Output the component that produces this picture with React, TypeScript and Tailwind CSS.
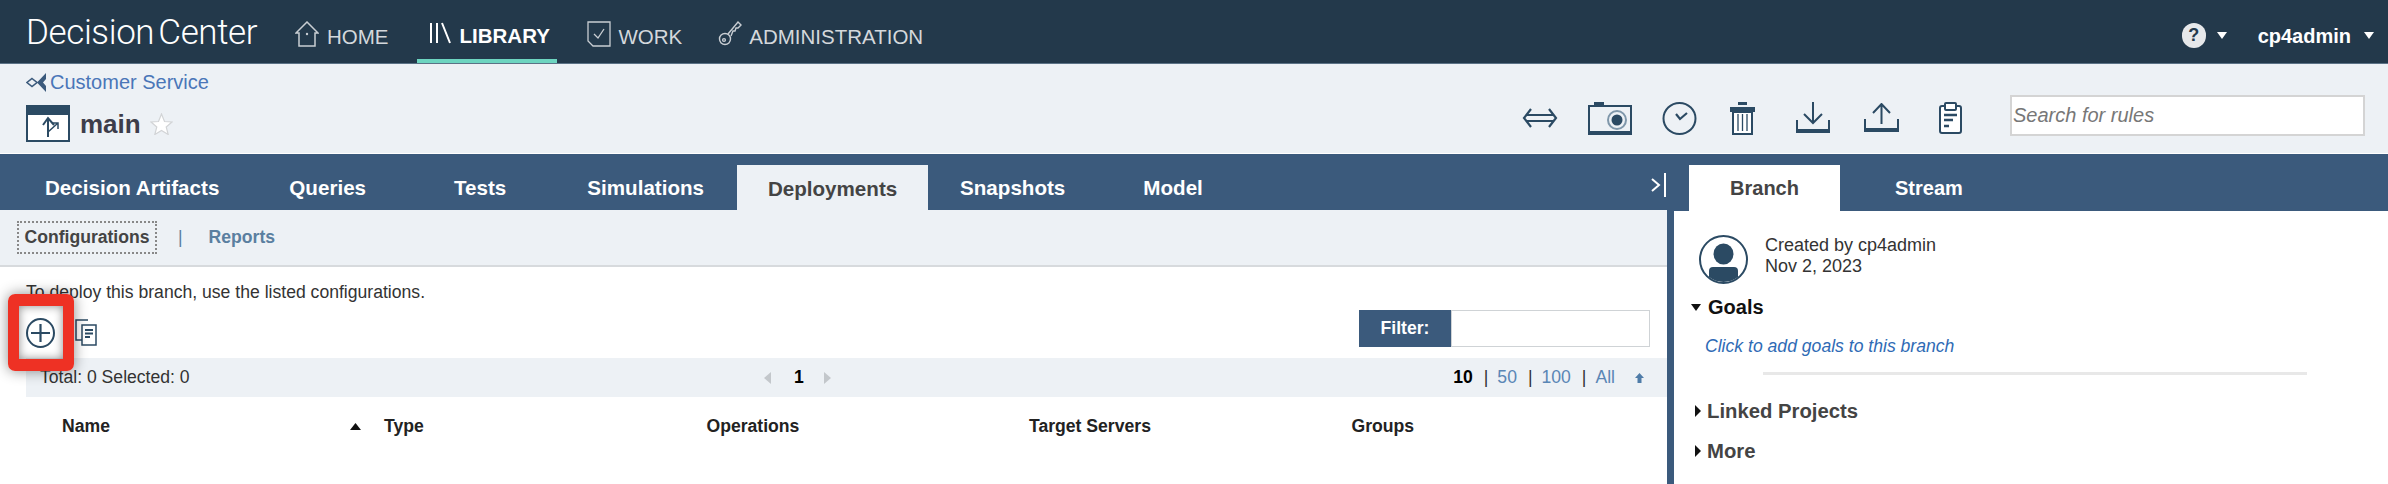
const ink = "#2b4a63";

const HomeIcon = () => (
  <svg width="24" height="26" viewBox="0 0 24 26" fill="none" stroke="#c9ced3" strokeWidth="1.5">
    <path d="M1 12 12 1l11 11h-3v13H4V12z" />
    <circle cx="12" cy="13" r="1.200" fill="#c9ced3" stroke="none" />
  </svg>
);

const LibraryIcon = () => (
  <svg width="22" height="22" viewBox="0 0 22 22" fill="none" stroke="#fff" strokeWidth="2">
    <path d="M2 1v20M8 1v20M13 1l8 20" />
  </svg>
);

const WorkIcon = () => (
  <svg width="24" height="26" viewBox="0 0 24 26" fill="none" stroke="#c9ced3" strokeWidth="1.3">
    <path d="M1 1h22v24H6l-5-5z" />
    <path d="M7 13l4 4 6-9" />
  </svg>
);

const KeyIcon = () => (
  <svg width="24" height="26" viewBox="0 0 24 26" fill="none" stroke="#c9ced3" strokeWidth="1.400">
    <circle cx="7" cy="18" r="5.500" />
    <circle cx="6" cy="19" r="1.400" />
    <path d="M10 13 20 1l3 3-3 3-2 0-1 3-2 0-2 5" />
  </svg>
);

const Caret = ({ color = "#fff" }: { color?: string }) => (
  <svg width="10" height="7" viewBox="0 0 10 7">
    <path d="M0 0h10L5 7z" fill={color} />
  </svg>
);

const CaretUp = ({ color = "#111" }: { color?: string }) => (
  <svg width="11" height="7" viewBox="0 0 11 7">
    <path d="M0 7h11L5.500 0z" fill={color} />
  </svg>
);

const ProjectIcon = () => (
  <svg width="20" height="19" viewBox="0 0 20 19" fill="none">
    <path d="M6 5.500 11 9.500 6 13.500 1 9.500z" stroke="#3b5a7c" strokeWidth="1.600" />
    <path d="M11 9.500 20 0v6l-3 3.500 3 3.500v6z" fill="#3b5a7c" />
  </svg>
);

const BranchIcon = () => (
  <svg width="44" height="37" viewBox="0 0 44 37" fill="none">
    <rect x="1" y="1" width="42" height="35" fill="#fff" stroke={ink} strokeWidth="2" />
    <rect x="1" y="1" width="42" height="9" fill={ink} />
    <path d="M22 32V14M17 20l5-7 6 7" stroke={ink} strokeWidth="2" />
    <path d="M22 27l10-9M26 18h6v6" stroke={ink} strokeWidth="1.500" />
  </svg>
);

const StarIcon = () => (
  <svg width="23" height="22" viewBox="0 0 23 22">
    <path d="M11.500 1l3 7.500 7.500.5-5.800 5 2 7.500-6.700-4-6.700 4 2-7.500L1 9l7.500-.5z" fill="#fff" stroke="#d2d4d6" strokeWidth="1.200" />
  </svg>
);

const CompareIcon = () => (
  <svg width="36" height="20" viewBox="0 0 36 20" fill="none" stroke={ink} strokeWidth="2.200">
    <path d="M9 1 2 10l7 9M27 1l7 9-7 9" />
    <path d="M5 7h26M5 13h26" strokeWidth="1.800" />
  </svg>
);

const CameraIcon = () => (
  <svg width="44" height="33" viewBox="0 0 44 33" fill="none">
    <rect x="6" y="0" width="10" height="5" fill={ink} />
    <rect x="1" y="4" width="42" height="28" stroke={ink} strokeWidth="2" />
    <rect x="1" y="29" width="42" height="3" fill={ink} />
    <circle cx="29" cy="18" r="9" stroke="#7f97aa" strokeWidth="2" />
    <circle cx="29" cy="18" r="5.500" fill={ink} />
  </svg>
);

const ClockIcon = () => (
  <svg width="35" height="33" viewBox="0 0 35 33" fill="none" stroke={ink} strokeWidth="2">
    <ellipse cx="17.500" cy="16.500" rx="16" ry="15.500" />
    <path d="M14 12l4 5 7-6" strokeWidth="2.200" />
  </svg>
);

const TrashIcon = () => (
  <svg width="25" height="33" viewBox="0 0 25 33" fill="none">
    <rect x="8" y="0" width="9" height="3" fill={ink} />
    <rect x="0" y="5" width="25" height="5" fill={ink} />
    <rect x="3" y="10" width="19" height="22" fill="#fff" stroke={ink} strokeWidth="2" />
    <path d="M8 12v17M12.500 12v17M17 12v17" stroke={ink} strokeWidth="1.300" />
  </svg>
);

const DownloadIcon = () => (
  <svg width="34" height="32" viewBox="0 0 34 32" fill="none" stroke={ink} strokeWidth="2">
    <path d="M17 0v20M8 12l9 9 9-9" />
    <path d="M1 18v12h32V18" />
    <path d="M1 29h32" strokeWidth="4" />
  </svg>
);

const UploadIcon = () => (
  <svg width="35" height="30" viewBox="0 0 35 30" fill="none" stroke={ink} strokeWidth="2">
    <path d="M17.500 21V1M9 10l8.500-9 8.500 9" />
    <path d="M1 16v12h33V16" />
    <path d="M1 27h33" strokeWidth="4" />
  </svg>
);

const ClipboardIcon = () => (
  <svg width="23" height="32" viewBox="0 0 23 32" fill="none">
    <rect x="1" y="4" width="21" height="27" rx="2" fill="#fff" stroke={ink} strokeWidth="2" />
    <rect x="6" y="1" width="11" height="7" rx="1" fill="#fff" stroke={ink} strokeWidth="2" />
    <path d="M5 13h13M5 18h9M5 24h5" stroke={ink} strokeWidth="2.500" />
  </svg>
);

const CollapseIcon = () => (
  <svg width="16" height="24" viewBox="0 0 16 24" fill="none" stroke="#fff" strokeWidth="2">
    <path d="M1 6l7 6-7 6M14 0v24" />
  </svg>
);

const PlusIcon = () => (
  <svg width="29" height="30" viewBox="0 0 29 30" fill="none" stroke={ink}>
    <ellipse cx="14.500" cy="15" rx="13.500" ry="14" strokeWidth="2" />
    <path d="M14.500 6v18M5 15h19" strokeWidth="2.200" />
  </svg>
);

const CopyIcon = () => (
  <svg width="22" height="27" viewBox="0 0 22 27" fill="none" stroke={ink} strokeWidth="1.500">
    <path d="M13 1H1v20h6" />
    <rect x="7" y="6" width="14" height="20" fill="#fff" />
    <path d="M10 11h8M10 14.500h8M10 18h5" strokeWidth="1.800" />
  </svg>
);

const AvatarIcon = () => (
  <svg width="49" height="49" viewBox="0 0 49 49" fill="none">
    <circle cx="24.500" cy="24.500" r="23.500" fill="#fff" stroke={ink} strokeWidth="2" />
    <ellipse cx="24.500" cy="19" rx="10" ry="10.500" fill={ink} />
    <path d="M10 42v-6a4 4 0 0 1 4-4h21a4 4 0 0 1 4 4v6a24 24 0 0 1-29 0z" fill={ink} />
  </svg>
);

const SmallArrow = ({ d, color }: { d: string; color: string }) => (
  <svg width="11" height="14" viewBox="0 0 11 14">
    <path d={d} fill={color} />
  </svg>
);

const mainTabs = [
  { label: "Decision Artifacts", className: "ml-[45px]" },
  { label: "Queries", className: "ml-[70px]" },
  { label: "Tests", className: "ml-[88px]" },
  { label: "Simulations", className: "ml-[81px]" },
];

const columns = ["Type", "Operations", "Target Servers", "Groups"];

export default function App() {
  return (
    <div className="flex h-[484px] w-[2388px] flex-col overflow-hidden bg-white font-['Liberation_Sans',Arial,sans-serif] text-[17.600px] text-[#333]">
      <header className="flex h-[64px] shrink-0 items-stretch border-b border-[#5b7286] bg-[#23394b] pl-[26px] text-[20.500px] text-[#d4d8dc]">
        <div className="mt-[14px] w-[269px] font-['Roboto',sans-serif] text-[35px] leading-[37px] font-light tracking-[-0.400px] text-white [word-spacing:-4px]">
          Decision Center
        </div>
        <div className="mt-[5px] flex items-center gap-[8px]">
          <HomeIcon />
          <span className="pt-[6px]">HOME</span>
        </div>
        <div className="ml-[28px] flex w-[140px] items-center gap-[9px] border-b-4 border-[#6dd5c0] pt-[6px] pl-[12px] font-bold text-white">
          <LibraryIcon />
          <span className="pt-[8px]">LIBRARY</span>
        </div>
        <div className="ml-[30px] flex items-center gap-[8px] pt-[5px]">
          <WorkIcon />
          <span className="pt-[6px]">WORK</span>
        </div>
        <div className="ml-[36px] flex items-center gap-[7px] pt-[5px]">
          <KeyIcon />
          <span className="pt-[6px]">ADMINISTRATION</span>
        </div>
        <div className="ml-auto flex items-center pt-[8px] pr-[14px] text-[20px] font-bold text-white">
          <div className="flex h-[25px] w-[24px] items-center justify-center rounded-full bg-[#e6e8ea] text-[18px] text-[#23394b]">?</div>
          <div className="ml-[11px]"><Caret /></div>
          <span className="ml-[31px]">cp4admin</span>
          <div className="ml-[13px]"><Caret /></div>
        </div>
      </header>

      <div className="flex h-[90px] shrink-0 border-b border-white bg-[#edf1f5] pr-[23px] pl-[26px]">
        <div>
          <div className="mt-[8px] flex items-center gap-[4px] text-[20px] leading-[20px] text-[#4a76b8]">
            <ProjectIcon />
            <span>Customer Service</span>
          </div>
          <div className="mt-[13px] flex items-center">
            <BranchIcon />
            <span className="ml-[10px] text-[26px] leading-[30px] font-bold text-[#3d3d4a]">main</span>
            <span className="ml-[9px]"><StarIcon /></span>
          </div>
        </div>
        <div className="ml-auto flex items-center pt-[19px]">
          <CompareIcon />
          <span className="ml-[30px]"><CameraIcon /></span>
          <span className="ml-[30px]"><ClockIcon /></span>
          <span className="ml-[33px]"><TrashIcon /></span>
          <span className="ml-[41px]"><DownloadIcon /></span>
          <span className="ml-[34px]"><UploadIcon /></span>
          <span className="ml-[40px]"><ClipboardIcon /></span>
          <input
            readOnly
            placeholder="Search for rules"
            className="mb-[6px] ml-[48px] h-[41px] w-[355px] border-2 border-[#d4d4d4] bg-white pl-[1px] text-[20px] italic outline-none placeholder:text-[#777]"
          />
        </div>
      </div>

      <div className="flex min-h-0 flex-1">
        <div className="flex w-[1667px] shrink-0 flex-col">
          <div className="relative flex h-[56px] shrink-0 items-end bg-[#3b5a7c] text-[20.600px] font-bold text-white">
            {mainTabs.map((tab) => (
              <div key={tab.label} className={`flex h-[45px] items-center pt-[1px] ${tab.className}`}>{tab.label}</div>
            ))}
            <div className="ml-[33px] flex h-[45px] w-[191px] items-center justify-center bg-[#edf1f5] pt-[3px] text-[#444]">Deployments</div>
            <div className="ml-[32px] flex h-[45px] items-center pt-[1px]">Snapshots</div>
            <div className="ml-[78px] flex h-[45px] items-center pt-[1px]">Model</div>
            <div className="absolute top-[19px] right-0"><CollapseIcon /></div>
          </div>

          <div className="flex h-[57px] shrink-0 items-start border-b-2 border-[#d7dadd] bg-[#edf1f5] pt-[11px] pl-[17px] font-bold">
            <div className="flex h-[33px] w-[140px] items-center justify-center border-2 border-dotted border-[#888] text-[#444]">Configurations</div>
            <div className="ml-[21px] flex h-[33px] items-center font-normal text-[#5a7fa0]">|</div>
            <div className="ml-[26px] flex h-[33px] items-center text-[#5a7fa0]">Reports</div>
          </div>

          <div className="relative flex-1 pl-[26px]">
            <div className="pt-[15px] leading-[21px]">To deploy this branch, use the listed configurations.</div>
            <div className="mt-[7px] flex h-[37px] items-start pr-[17px]">
              <div className="mt-[8px]"><PlusIcon /></div>
              <div className="mt-[9px] ml-[20px]"><CopyIcon /></div>
              <div className="ml-auto flex h-[37px]">
                <div className="flex w-[92px] items-center justify-center bg-[#3b5a7c] font-bold text-white">Filter:</div>
                <input readOnly className="h-[37px] w-[199px] border border-[#cfd3d6] bg-white outline-none" />
              </div>
            </div>
            <div className="mt-[11px] flex h-[39px] items-center bg-[#edf1f5] pr-[22px] pl-[14px]">
              <span className="w-[722px]">Total: 0 Selected: 0</span>
              <SmallArrow d="M9 1v12L2 7z" color="#c3c7cb" />
              <span className="ml-[21px] font-bold text-black">1</span>
              <span className="ml-[18px]"><SmallArrow d="M2 1v12l7-6z" color="#c3c7cb" /></span>
              <span className="ml-auto font-bold text-black">10</span>
              <span className="ml-[11px]">|</span>
              <span className="ml-[9px] text-[#5a86b5]">50</span>
              <span className="ml-[11px]">|</span>
              <span className="ml-[9px] text-[#5a86b5]">100</span>
              <span className="ml-[11px]">|</span>
              <span className="ml-[9px] text-[#5a86b5]">All</span>
              <span className="ml-[19px]">
                <SmallArrow d="M5.500 2 10 7H7.500v5h-4V7H1z" color="#4f7ca8" />
              </span>
            </div>
            <div className="mt-[19px] flex h-[21px] items-center pl-[36px] font-bold text-[#222]">
              <div className="flex w-[322px] shrink-0 items-center justify-between pr-[23px]">
                <span>Name</span>
                <CaretUp />
              </div>
              {columns.map((column) => (
                <div key={column} className="w-[322.500px] shrink-0">{column}</div>
              ))}
            </div>

            <div className="absolute top-[27px] left-[8px] flex h-[77px] w-[66px] rounded-[7px] border-x-[11px] border-t-[12px] border-b-[12px] border-[#ee3124] shadow-[0_0_14px_rgba(0,0,0,0.45),inset_0_0_10px_rgba(0,0,0,0.45)]" />
          </div>
        </div>

        <div className="flex min-w-0 flex-1 flex-col border-l-[7px] border-[#3b5a7c]">
          <div className="flex h-[57px] shrink-0 items-end bg-[#3b5a7c] pl-[15px] text-[20px] font-bold text-white">
            <div className="flex h-[46px] w-[151px] items-center justify-center bg-white text-[#444]">Branch</div>
            <div className="ml-[55px] flex h-[46px] items-center">Stream</div>
          </div>
          <div className="pt-[24px] pl-[25px] text-[18px]">
            <div className="flex">
              <AvatarIcon />
              <div className="ml-[17px] leading-[21px]">
                <div>Created by cp4admin</div>
                <div>Nov 2, 2023</div>
              </div>
            </div>
          </div>
          <div className="mt-[11px] flex items-center gap-[7px] pl-[17px] text-[20px] leading-[24px] font-bold text-[#111]">
            <Caret color="#111" />
            <span>Goals</span>
          </div>
          <div className="mt-[17px] pl-[31px] leading-[21px] text-[#2f6bb5] italic">Click to add goals to this branch</div>
          <div className="mt-[15px] ml-[89px] h-[3px] w-[544px] bg-[#e8e8e8]" />
          <div className="mt-[24px] flex items-center gap-[8px] pl-[19px] text-[20.300px] leading-[24px] font-bold text-[#444]">
            <SmallArrow d="M2 1v12l6-6z" color="#111" />
            <span className="-ml-[5px]">Linked Projects</span>
          </div>
          <div className="mt-[16px] flex items-center gap-[8px] pl-[19px] text-[20.300px] leading-[24px] font-bold text-[#444]">
            <SmallArrow d="M2 1v12l6-6z" color="#111" />
            <span className="-ml-[5px]">More</span>
          </div>
        </div>
      </div>
    </div>
  );
}
